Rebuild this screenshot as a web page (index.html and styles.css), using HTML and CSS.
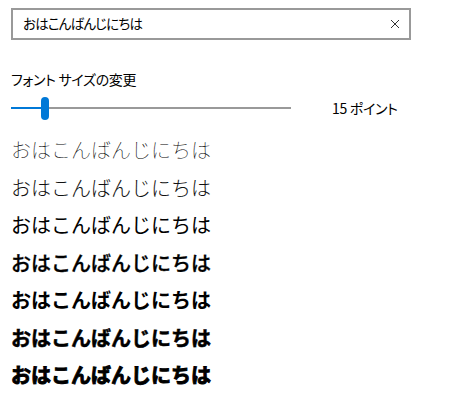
FILE: index.html
```html
<!DOCTYPE html>
<html lang="ja">
<head>
<meta charset="utf-8">
<link rel="stylesheet" href="styles.css">
</head>
<body>
<div class="page">
  <div class="search">
    <span class="search-text">おはこんばんじにちは</span>
    <svg class="clear" width="10" height="10" viewBox="0 0 10 10"><path d="M1 1 L9 9 M9 1 L1 9" stroke="#333" stroke-width="1" fill="none"/></svg>
  </div>
  <div class="label">フォント サイズの変更</div>
  <div class="slider-row">
    <div class="slider">
      <div class="fill"></div>
      <div class="thumb"></div>
      <div class="rest"></div>
    </div>
    <div class="value">15 ポイント</div>
  </div>
  <div class="samples">
    <div class="sample w100">おはこんばんじにちは</div>
    <div class="sample w300">おはこんばんじにちは</div>
    <div class="sample w400">おはこんばんじにちは</div>
    <div class="sample w600">おはこんばんじにちは</div>
    <div class="sample w700">おはこんばんじにちは</div>
    <div class="sample w800">おはこんばんじにちは</div>
    <div class="sample w900">おはこんばんじにちは</div>
  </div>
</div>
</body>
</html>
```
FILE: styles.css
```css
html, body {
  margin: 0;
  background: #fff;
}
body {
  font-family: "Noto Sans CJK JP", "Noto Sans", sans-serif;
  color: #000;
}
.page {
  padding: 8px 0 0 11px;
}
.search {
  box-sizing: border-box;
  width: 400px;
  height: 32px;
  border: 2px solid #999;
  display: flex;
  align-items: center;
  justify-content: space-between;
  padding: 0 9px 0 10px;
}
.search-text {
  font-size: 13.5px;
  font-feature-settings: "palt";
  letter-spacing: -0.8px;
  line-height: 1;
}
.clear {
  display: block;
}
.label {
  margin-top: 30px;
  font-size: 14px;
  line-height: 18px;
  font-feature-settings: "palt";
  letter-spacing: -0.3px;
  color: #000;
}
.slider-row {
  display: flex;
  align-items: center;
  height: 24px;
  margin-top: 8px;
}
.slider {
  display: flex;
  align-items: center;
  width: 280px;
  height: 24px;
}
.fill {
  width: 30px;
  height: 2px;
  background: #0078d7;
}
.thumb {
  width: 8px;
  height: 23px;
  border-radius: 4px;
  background: #0078d7;
}
.rest {
  flex: 1;
  height: 2px;
  background: #999;
}
.value {
  margin-left: 41px;
  font-size: 14px;
  font-feature-settings: "palt";
  letter-spacing: -0.3px;
  line-height: 18px;
}
.samples {
  margin-top: 11px;
}
.sample {
  font-size: 20px;
  line-height: 37.5px;
  white-space: nowrap;
}
.w100 { font-weight: 100; color: #000; }
.w300 { font-weight: 300; color: #111; }
.w400 { font-weight: 400; }
.w600 { font-weight: 500; -webkit-text-stroke: 0.3px #000; }
.w700 { font-weight: 700; }
.w800 { font-weight: 700; -webkit-text-stroke: 0.5px #000; }
.w900 { font-weight: 700; -webkit-text-stroke: 0.9px #000; }
```
